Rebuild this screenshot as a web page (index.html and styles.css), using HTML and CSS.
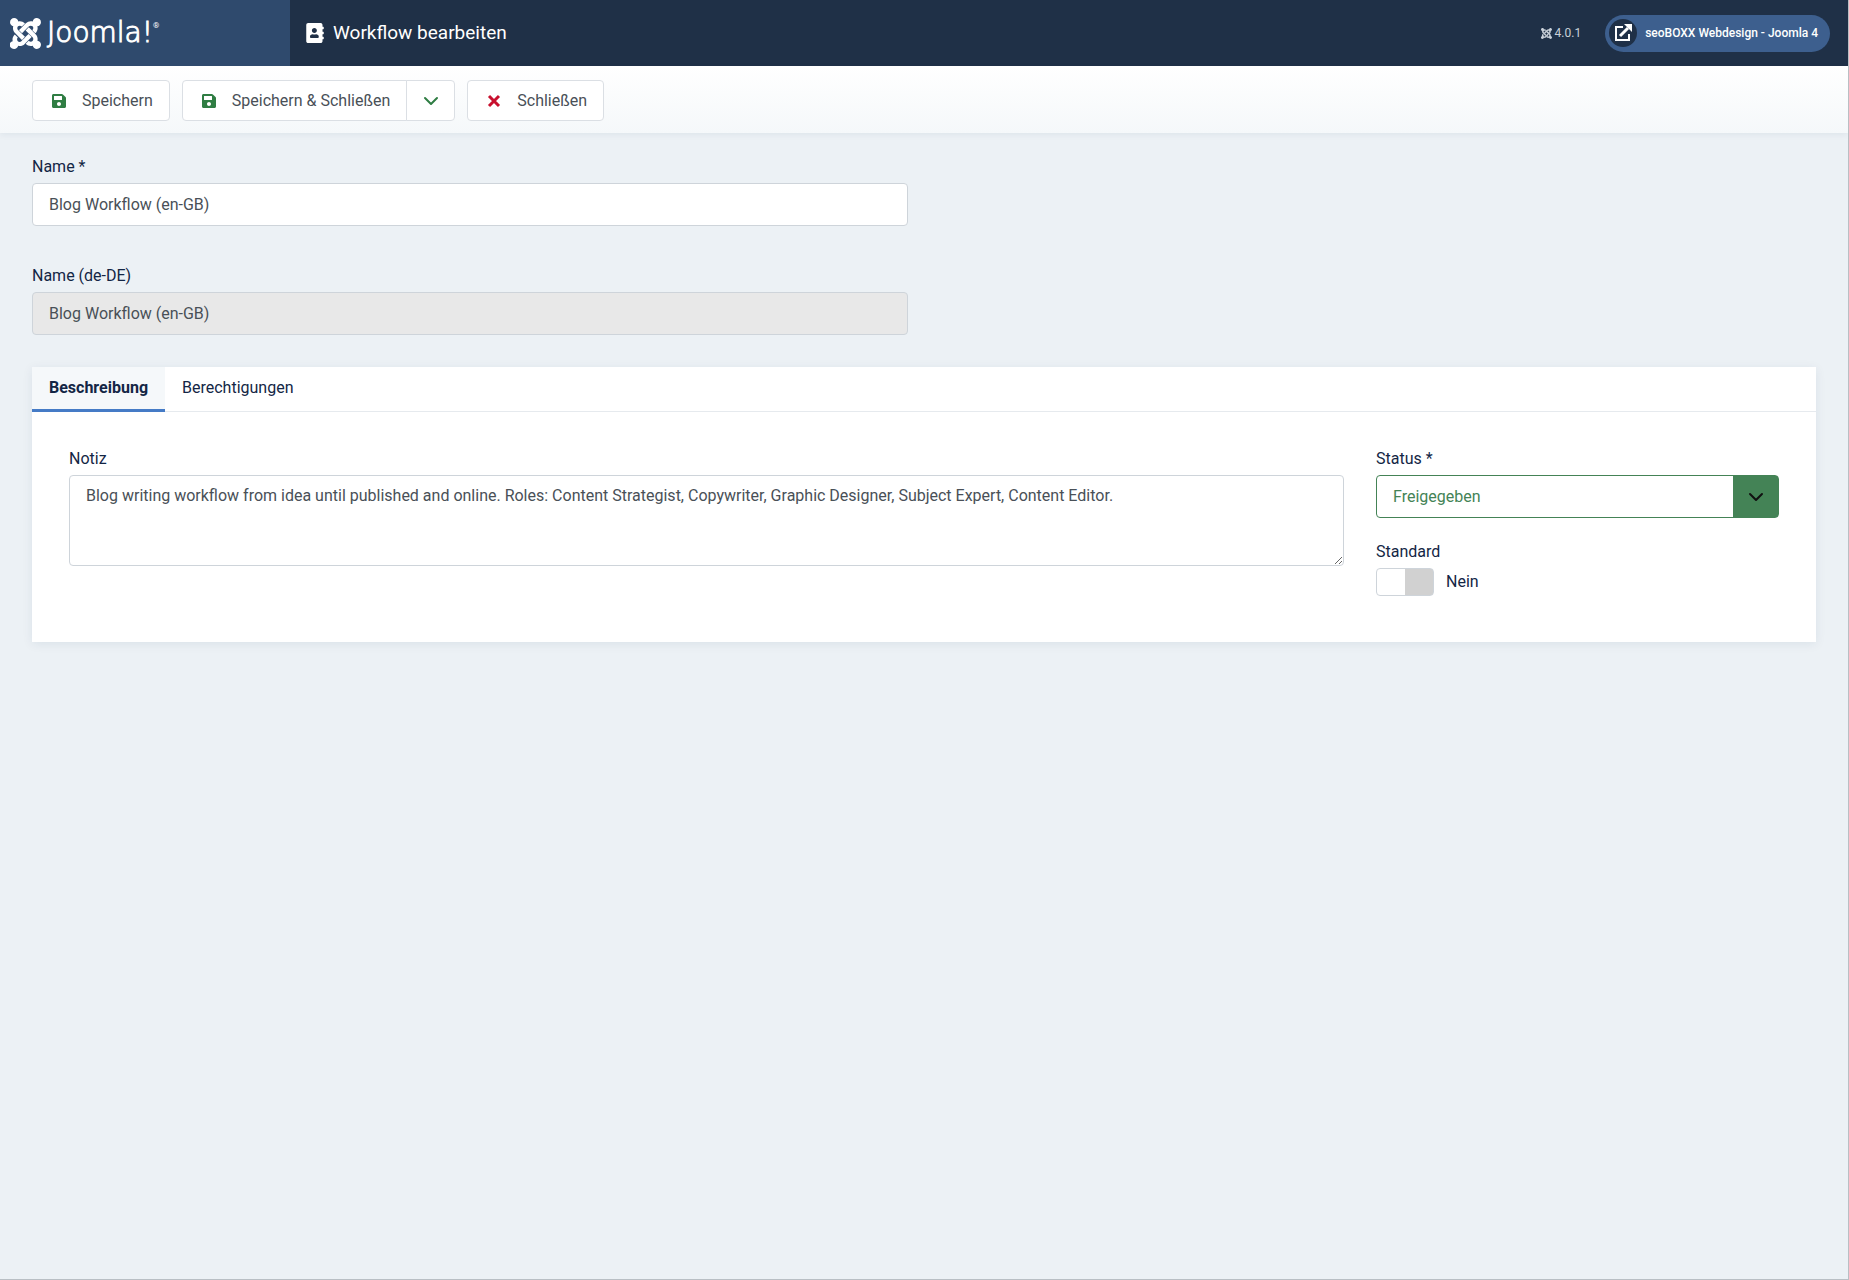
FILE: index.html
```html
<!DOCTYPE html>
<html lang="de">
<head>
  <meta charset="UTF-8">
  <meta name="viewport" content="width=device-width, initial-scale=1">
  <title>Workflow bearbeiten</title>
  <link rel="stylesheet" href="styles.css">
</head>
<body>
  <!-- shared icons -->
  <svg class="sprite" aria-hidden="true">
    <symbol id="icon-joomla" viewBox="0 32 448 448">
      <path d="M.6 92.1C.6 58.8 27.4 32 60.4 32c30 0 54.5 21.9 59.2 50.2 32.6-7.6 67.1.6 96.5 30l-44.3 44.3c-20.5-20.5-42.6-16.3-55.4-3.5-14.3 14.3-14.3 37.9 0 52.2l99.5 99.5-44 44.3c-87.7-87.2-49.7-49.7-99.8-99.7-26.8-26.5-35-64.8-24.8-98.9C20.4 144.6.6 120.7.6 92.1zm129.5 116.4l44.3 44.3c10-10 89.7-89.7 99.7-99.8 14.3-14.3 37.6-14.3 51.9 0 12.8 12.8 17 35-3.5 55.4l44 44.3c31.2-31.2 38.5-67.6 28.9-101.2 29.2-4.1 51.9-29.2 51.9-59.5 0-33.2-26.8-60.1-59.8-60.1-30.3 0-55.4 22.5-59.5 51.6-33.8-9.9-71.7-1.5-98.3 25.1-18.3 19.1-71.1 71.5-99.6 99.9zm266.3 152.2c8.2-32.7-.9-68.5-26.3-93.9-11.8-12.2 5 4.7-99.5-99.7l-44.3 44.3 99.7 99.7c14.3 14.3 14.3 37.6 0 51.9-12.8 12.8-35 17-55.4-3.5l-44 44.3c27.6 30.2 68 38.8 102.7 28 5.5 27.4 29.7 48.1 58.9 48.1 33 0 59.8-26.8 59.8-60.1 0-30.2-22.5-55-51.6-59.1zm-84.3-53.1l-44-44.3c-87 86.4-50.4 50.4-99.7 99.8-20.5 20.5-42.6 16.3-55.4 3.5-14.3-14.3-14.3-37.6 0-51.9l-44.3-44.3c-30.2 30.2-38 65.2-29.5 98.3-26.7 6-46.2 29.9-46.2 58.2C0 453.2 26.8 480 59.8 480c28.6 0 52.5-19.8 58.6-46.7 32.7 8.2 68.5-.6 94.2-26 32.1-32 12.2-12.4 99.5-99.7z"/>
    </symbol>
    <symbol id="icon-save" viewBox="0 32 448 448">
      <path d="M433.941 129.941l-83.882-83.882A48 48 0 0 0 316.118 32H48C21.49 32 0 53.49 0 80v352c0 26.51 21.49 48 48 48h352c26.51 0 48-21.49 48-48V163.882a48 48 0 0 0-14.059-33.941zM224 416c-35.346 0-64-28.654-64-64 0-35.346 28.654-64 64-64s64 28.654 64 64c0 35.346-28.654 64-64 64zm96-304.52V212c0 6.627-5.373 12-12 12H76c-6.627 0-12-5.373-12-12V108c0-6.627 5.373-12 12-12h228.52c3.183 0 6.235 1.264 8.485 3.515l3.48 3.48A11.996 11.996 0 0 1 320 111.48z"/>
    </symbol>
    <symbol id="icon-chevron" viewBox="0 0 16 16">
      <path d="M2 5l6 6 6-6" fill="none" stroke="currentColor" stroke-width="2" stroke-linecap="round" stroke-linejoin="round"/>
    </symbol>
  </svg>

  <header class="header">
    <a class="brand" href="#" aria-label="Joomla!">
      <svg class="brand-mark"><use href="#icon-joomla"/></svg>
      <span class="brand-name">Joomla!</span><span class="brand-reg">®</span>
    </a>
    <h1 class="page-title">
      <svg class="title-icon" viewBox="0 0 448 512" aria-hidden="true">
        <path d="M436 160c6.600 0 12-5.400 12-12v-40c0-6.600-5.400-12-12-12h-20V48c0-26.500-21.500-48-48-48H48C21.500 0 0 21.500 0 48v416c0 26.500 21.500 48 48 48h320c26.500 0 48-21.500 48-48v-48h20c6.600 0 12-5.400 12-12v-40c0-6.600-5.400-12-12-12h-20v-64h20c6.600 0 12-5.400 12-12v-40c0-6.600-5.400-12-12-12h-20v-64h20zm-228-32c35.300 0 64 28.700 64 64s-28.700 64-64 64-64-28.700-64-64 28.700-64 64-64zm112 236.800c0 10.600-10 19.200-22.400 19.200H118.400C106 384 96 375.400 96 364.800v-19.200c0-31.800 30.100-57.600 67.200-57.600h5c12.300 5.100 25.700 8 39.800 8s27.600-2.900 39.800-8h5c37.100 0 67.200 25.800 67.200 57.600v19.200z"/>
      </svg>
      Workflow bearbeiten
    </h1>
    <div class="header-items">
      <span class="version">
        <svg class="version-icon" aria-hidden="true"><use href="#icon-joomla"/></svg>
        4.0.1
      </span>
      <a class="site-link" href="#">
        <span class="site-link-icon">
          <svg viewBox="0 0 18 18" aria-hidden="true">
            <path d="M9 3H2v13h13v-6" fill="none" stroke="currentColor" stroke-width="2"/>
            <path d="M6 12L14 4" fill="none" stroke="currentColor" stroke-width="3"/>
            <path d="M10 0h8v8z" fill="currentColor"/>
          </svg>
        </span>
        seoBOXX Webdesign - Joomla 4
      </a>
    </div>
  </header>

  <form class="workflow-form">
    <div class="toolbar" role="toolbar" aria-label="Werkzeugleiste">
      <button type="button" class="btn">
        <svg class="btn-icon save" aria-hidden="true"><use href="#icon-save"/></svg>
        Speichern
      </button>
      <div class="btn-group">
        <button type="button" class="btn">
          <svg class="btn-icon save" aria-hidden="true"><use href="#icon-save"/></svg>
          Speichern &amp; Schließen
        </button>
        <button type="button" class="btn btn-toggle" aria-label="Weitere Aktionen">
          <svg class="chevron" aria-hidden="true"><use href="#icon-chevron"/></svg>
        </button>
      </div>
      <button type="button" class="btn">
        <svg class="btn-icon cancel" viewBox="0 0 14 14" aria-hidden="true">
          <path d="M2 2l10 10M12 2L2 12" fill="none" stroke="currentColor" stroke-width="3"/>
        </svg>
        Schließen
      </button>
    </div>

    <main class="content">
      <div class="title-fields">
        <div class="field">
          <label for="title">Name *</label>
          <input type="text" id="title" class="form-control" value="Blog Workflow (en-GB)" required>
        </div>
        <div class="field">
          <label for="title-lang">Name (de-DE)</label>
          <input type="text" id="title-lang" class="form-control" value="Blog Workflow (en-GB)" readonly>
        </div>
      </div>

      <section class="card">
        <div class="tabs" role="tablist">
          <button type="button" class="tab active" role="tab" aria-selected="true">Beschreibung</button>
          <button type="button" class="tab" role="tab" aria-selected="false">Berechtigungen</button>
        </div>
        <div class="panel" role="tabpanel">
          <div class="field">
            <label for="note">Notiz</label>
            <textarea id="note" class="form-control" rows="3">Blog writing workflow from idea until published and online. Roles: Content Strategist, Copywriter, Graphic Designer, Subject Expert, Content Editor.</textarea>
          </div>
          <div class="options">
            <div class="field">
              <label for="status">Status *</label>
              <div class="select-wrapper">
                <select id="status" class="form-control">
                  <option selected>Freigegeben</option>
                  <option>Gesperrt</option>
                </select>
                <svg class="chevron" aria-hidden="true"><use href="#icon-chevron"/></svg>
              </div>
            </div>
            <div class="field">
              <label for="default">Standard</label>
              <div class="switch-row">
                <input type="checkbox" id="default" class="switch" role="switch">
                <span>Nein</span>
              </div>
            </div>
          </div>
        </div>
      </section>
    </main>
  </form>
</body>
</html>
```
FILE: styles.css
```css
* {
  margin: 0;
  padding: 0;
  box-sizing: border-box;
}

body {
  font-family: Roboto, "Liberation Sans", sans-serif;
  font-size: 16px;
  line-height: 24px;
  min-height: 100vh;
  border-right: 1px solid #b9bfc4;
  border-bottom: 1px solid #b9bfc4;
  background: #ecf1f5;
  color: #132645;
}

button,
input,
select,
textarea {
  font: inherit;
}

.sprite {
  position: absolute;
  width: 0;
  height: 0;
}

svg {
  fill: currentColor;
}

/* Header */
.header {
  display: flex;
  height: 66px;
  background: #1f3047;
  color: #fff;
}

.brand {
  display: flex;
  align-items: center;
  width: 290px;
  padding-left: 10px;
  background: #2f4a6d;
  color: #fff;
  text-decoration: none;
}

.brand-mark {
  width: 31px;
  height: 31px;
  margin-right: 6px;
}

.brand-name {
  font-family: "DejaVu Sans Light", "DejaVu Sans", sans-serif;
  font-weight: 200;
  font-size: 28px;
  -webkit-text-stroke: 1px #fff;
}

.brand-reg {
  align-self: flex-start;
  margin-top: 14px;
  font-size: 8px;
}

.page-title {
  display: flex;
  flex: 1;
  align-items: center;
  gap: 9px;
  padding-left: 16px;
  font-size: 19px;
  font-weight: 400;
}

.title-icon {
  width: 18px;
  height: 20px;
}

.header-items {
  display: flex;
  align-items: center;
  gap: 24px;
  padding-right: 18px;
}

.version {
  display: flex;
  align-items: center;
  gap: 3px;
  font-size: 12px;
  color: #c9d0d9;
}

.version-icon {
  width: 11px;
  height: 11px;
}

.site-link {
  display: flex;
  align-items: center;
  gap: 8px;
  height: 37px;
  padding: 0 12px 0 4px;
  border-radius: 19px;
  background: #3d5f8e;
  color: #fff;
  font-size: 12px;
  font-weight: 500;
  text-decoration: none;
}

.site-link-icon {
  display: flex;
  align-items: center;
  justify-content: center;
  width: 28px;
  height: 28px;
  border-radius: 50%;
  background: #1f3047;
}

.site-link-icon svg {
  width: 18px;
  height: 18px;
}

/* Toolbar */
.toolbar {
  display: flex;
  gap: 12px;
  padding: 14px 32px 12px;
  background: linear-gradient(#fff, #f5f8fa);
  box-shadow: 0 2px 6px rgba(19, 47, 83, 0.06);
}

.btn {
  display: flex;
  align-items: center;
  gap: 16px;
  height: 41px;
  padding: 0 16px 0 19px;
  border: 1px solid #dbdfe4;
  border-radius: 4px;
  background: #fff;
  color: #495057;
  cursor: pointer;
}

.btn-group {
  display: flex;
}

.btn-group .btn:first-child {
  border-radius: 4px 0 0 4px;
}

.btn-group .btn-toggle {
  width: 49px;
  justify-content: center;
  margin-left: -1px;
  padding: 0;
  border-radius: 0 4px 4px 0;
  color: #2f7d43;
}

.btn-icon {
  width: 14px;
  height: 14px;
}

.save {
  color: #2f7d43;
}

.cancel {
  color: #c8102e;
}

.chevron {
  width: 16px;
  height: 16px;
}

/* Form */
.content {
  padding: 22px 32px 32px;
}

.title-fields {
  width: 50%;
  padding-right: 16px;
}

.title-fields .field {
  margin-bottom: 38px;
}

.title-fields .field:last-child {
  margin-bottom: 32px;
}

.field label {
  display: block;
  margin-bottom: 4px;
}

.form-control {
  display: block;
  width: 100%;
  height: 43px;
  padding: 8px 16px;
  border: 1px solid #ced4da;
  border-radius: 4px;
  background: #fff;
  color: #495057;
  outline: none;
}

.form-control:read-only:not(select) {
  background: #e8e8e8;
}

textarea.form-control {
  height: 91px;
  resize: vertical;
}

/* Tabs */
.card {
  background: #fff;
  box-shadow: 0 2px 10px rgba(19, 47, 83, 0.08);
}

.tabs {
  display: flex;
  border-bottom: 1px solid #e6eaee;
}

.tab {
  height: 45px;
  margin-bottom: -1px;
  padding: 0 17px;
  border: 0;
  border-bottom: 3px solid transparent;
  background: none;
  color: inherit;
  cursor: pointer;
}

.tab.active {
  border-bottom-color: #457bc6;
  background: #f5f8fa;
  font-weight: 700;
}

.panel {
  display: grid;
  grid-template-columns: minmax(0, 1fr) 403px;
  gap: 32px;
  padding: 35px 37px 46px;
}

.options {
  display: flex;
  flex-direction: column;
  gap: 22px;
}

.select-wrapper {
  position: relative;
}

.select-wrapper select {
  appearance: none;
  padding-right: 62px;
  border-color: #448356;
  background: linear-gradient(#448356, #448356) right / 45px 100% no-repeat #fff;
  color: #448356;
}

.select-wrapper .chevron {
  position: absolute;
  top: 14px;
  right: 15px;
  color: #111;
  pointer-events: none;
}

.switch-row {
  display: flex;
  align-items: center;
  gap: 12px;
}

.switch {
  appearance: none;
  width: 58px;
  height: 28px;
  border: 1px solid #ced4da;
  border-radius: 4px;
  background: linear-gradient(90deg, #fff 50%, #d1d1d1 50%);
  cursor: pointer;
}

.switch:checked {
  background: linear-gradient(90deg, #448356 50%, #fff 50%);
}
```
